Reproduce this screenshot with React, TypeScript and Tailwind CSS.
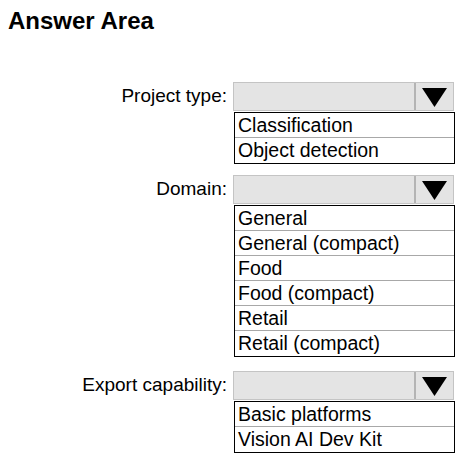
import React from "react";

const font = { fontFamily: '"Liberation Sans", Arial, sans-serif' };

function Group({ label, options }: { label: string; options: string[] }) {
  return (
    <div className="flex">
      <div className="w-[233px] shrink-0 pr-[6px] pt-[3px] text-right text-[19px] leading-[22px] text-black">{label}</div>
      <div className="flex flex-col">
        <div className="flex h-[29px] w-[221px] border border-[#c4c4c4] bg-[#e4e4e4]">
          <div className="flex-1" />
          <div className="flex w-[39px] items-center justify-center border-l-2 border-[#b4b4b4]">
            <svg width="25" height="20" viewBox="0 0 25 20">
              <polygon points="0,1 25,1 12.5,20" fill="#000" />
            </svg>
          </div>
        </div>
        <div className="mt-[1px] ml-[1px] w-[221px] border border-black bg-white">
          {options.map((o, i) => (
            <div
              key={o}
              className={
                "h-[25px] pl-[3px] text-[19.5px] leading-[24px] text-black " +
                (i < options.length - 1 ? "border-b border-[#a8a8a8]" : "")
              }
            >
              {o}
            </div>
          ))}
        </div>
      </div>
    </div>
  );
}

export default function App() {
  return (
    <div className="h-[463px] w-[465px] bg-white" style={font}>
      <div className="pl-[8px] pt-[7px] text-[24px] font-bold leading-[28px] text-black">Answer Area</div>
      <div className="mt-[47px] flex flex-col">
        <Group label="Project type:" options={["Classification", "Object detection"]} />
        <div className="h-[11px]" />
        <Group
          label="Domain:"
          options={["General", "General (compact)", "Food", "Food (compact)", "Retail", "Retail (compact)"]}
        />
        <div className="h-[14px]" />
        <Group label="Export capability:" options={["Basic platforms", "Vision AI Dev Kit"]} />
      </div>
    </div>
  );
}
